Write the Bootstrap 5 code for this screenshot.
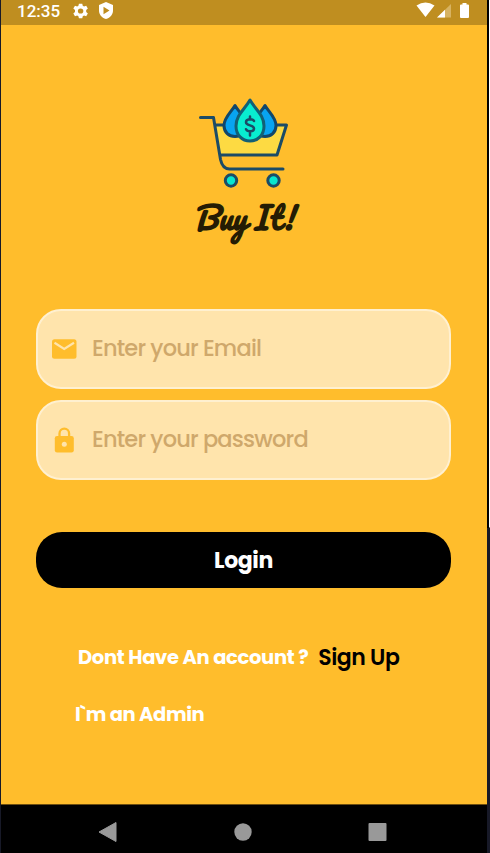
<!DOCTYPE html>
<html lang="en">
<head>
<meta charset="utf-8">
<meta name="viewport" content="width=device-width, initial-scale=1">
<title>Buy It!</title>
<link href="https://cdn.jsdelivr.net/npm/bootstrap@5.3.0/dist/css/bootstrap.min.css" rel="stylesheet">
<style>
body{height:853px;overflow:hidden;background:#171927;font-family:Poppins,Inter,"Open Sans",sans-serif}
.phone{width:486px;height:853px;margin-left:1px;background:#ffbd2c}
.edge{width:3px;height:528px;background:#000;border-right:1px solid #fff;border-bottom:1px solid #000}
.statusbar{height:25px;background:#bf8e20;padding:0 17px 3px 16px;font:500 17px/22px Roboto,sans-serif;flex:none}
.logo{padding-top:70px;height:284px}
.logo svg{margin-right:2px}
.brand{font:700 30.5px/44px Pacifico,Lato,cursive;color:#251c04;margin-top:2px;letter-spacing:-.4px;transform:skewX(-7deg)}
.form-area{padding:0 36px 0 35px}
.field{height:80px;border:2px solid #fff0d0;border-radius:25px;background:#ffe4ac;padding-left:14px;gap:15px}
.field + .field{margin-top:11px}
.field .form-control{font-size:22.5px;font-weight:500;letter-spacing:-.8px;color:#6b5632}
.field .form-control::placeholder{color:#cfa86b;opacity:1}
.login{height:56px;margin-top:52px;border-radius:26px;font-size:22px;font-weight:700;letter-spacing:-.4px}
.login,.login:hover{background:#000;color:#fff}
.links{margin-top:55px;height:30px;padding-left:77px;gap:10px;font-size:19.5px;font-weight:700}
.ask{letter-spacing:-.32px}
.signup{font-size:22px;font-weight:600;letter-spacing:-.5px;margin-top:-2px}
.admin{margin-top:28px;padding-left:74px;font-size:19.5px;line-height:28px;font-weight:700;letter-spacing:-.38px}
.navkeys{height:49px;background:#000;border-top:1px solid #6d4e10;padding:6px 100px 0 97px}
</style>
</head>
<body class="d-flex">
<main class="phone d-flex flex-column flex-shrink-0">
  <header class="statusbar d-flex align-items-center text-white">
    <span>12:35</span>
    <svg class="ms-2 ps-1" width="22" height="18" viewBox="0 0 22 18"><g transform="translate(10.500 9) scale(1.200 1.120)" fill="#fff"><path fill-rule="evenodd" d="M-1.700-8h3.400l.5 2.200 1.300.8 2.200-.8 1.700 3L5.700-1.200v2.400l1.700 1.600-1.700 3-2.200-.8-1.300.8-.5 2.200h-3.400l-.5-2.200-1.300-.8-2.200.8-1.700-3 1.700-1.600v-2.400l-1.700-1.600 1.700-3 2.200.8 1.300-.8zM0-2.800a2.800 2.800 0 1 0 0 5.600 2.800 2.800 0 0 0 0-5.600z"/></g></svg>
    <svg class="ms-2" width="16" height="18" viewBox="0 0 16 18"><path fill="#fff" fill-rule="evenodd" d="M8 0l7 3v5.500c0 4-2.500 7.200-7 8.500-4.500-1.300-7-4.500-7-8.500V3zM5.500 4.800v7.500l6-3.700z"/></svg>
    <svg class="ms-auto" width="54" height="18" viewBox="0 0 54 18"><path fill="#fff" d="M.5 3.500Q9.500-2.500 18.500 3.500L9.500 15z"/><path fill="#d7b362" d="M21 15.500L35 2v13.500z"/><path fill="#fff" d="M21 15.500l8-7.700v7.700zM46.500 1h4v1.500H52q1 0 1 1V15q0 1-1 1h-7q-1 0-1-1V3.500q0-1 1-1h1.500z"/></svg>
  </header>

  <section class="logo d-flex flex-column align-items-center flex-shrink-0">
    <svg width="92" height="98" viewBox="197 95 92 98" fill="none" stroke="#1c4b66" stroke-width="3" stroke-linecap="round" stroke-linejoin="round">
      <path fill="#fdda42" stroke="none" d="M215 125h71l-9 30h-57z"/>
      <path d="M200.500 117.500h13l7 42q2 9.500 9 9.500H283M215.500 125H223M277 125h9.500l-9.500 30h-56"/>
      <g fill="#08a4f1" stroke="#11476b"><path d="M235 105.500c-4 7-11 12-11 20 0 7 5 11 11 11s11-4 11-11c0-8-7-13-11-20zM265 105.500c-4 7-11 12-11 20 0 7 5 11 11 11s11-4 11-11c0-8-7-13-11-20z"/></g>
      <path fill="#08edd0" stroke="#126076" d="M250 100c-5 9-14 15-14 26 0 9 6 15 14 15s14-6 14-15c0-11-9-17-14-26z"/>
      <path stroke-width="2.500" d="M254 121c-1-2.500-8-2.500-8 1.200 0 4 8 2.300 8 6.300 0 3.800-7 3.600-8 .7M250 116.500v3M250 131.500v4"/>
      <g fill="#08e6cf"><circle cx="231" cy="180.500" r="5.700"/><circle cx="273.500" cy="180.500" r="5.700"/></g>
    </svg>
    <div class="brand ms-1">Buy It!</div>
  </section>

  <form class="form-area">
    <div class="field d-flex align-items-center">
      <svg width="25" height="20" viewBox="0 0 25 20" class="flex-shrink-0"><rect width="24.500" height="19.500" y=".2" rx="2.500" fill="#ffbd2c"/><path d="M2.500 3.800l9.700 6.200L22 3.800" fill="none" stroke="#ffe4ac" stroke-width="2.200"/></svg>
      <input type="email" class="form-control border-0 bg-transparent shadow-none p-0" placeholder="Enter your Email" aria-label="Email">
    </div>
    <div class="field d-flex align-items-center">
      <svg width="25" height="26" viewBox="0 0 25 26" class="flex-shrink-0"><path d="M7.500 10V6.500a4.800 4.800 0 0 1 9.600 0V10" fill="none" stroke="#ffbd2c" stroke-width="2.300"/><rect x="2.800" y="9" width="19" height="16.500" rx="2.300" fill="#ffbd2c"/><circle cx="12.300" cy="17.300" r="2.500" fill="#ffe4ac"/></svg>
      <input type="password" class="form-control border-0 bg-transparent shadow-none p-0" placeholder="Enter your password" aria-label="Password">
    </div>
    <button type="button" class="login btn w-100 border-0 p-0 d-block">Login</button>
  </form>

  <div class="links d-flex align-items-center text-nowrap">
    <span class="ask text-white">Dont Have An account ?</span>
    <a href="#" class="signup text-black text-decoration-none">Sign Up</a>
  </div>
  <a href="#" class="admin text-white text-decoration-none">I`m an Admin</a>

  <nav class="navkeys mt-auto d-flex justify-content-between align-items-center">
    <svg width="19" height="20" viewBox="0 0 19 20"><path fill="#999" d="M18 0.500v19L1 10z" stroke="#999" stroke-linejoin="round"/></svg>
    <svg width="18" height="18" viewBox="0 0 18 18"><circle cx="9" cy="9" r="8.700" fill="#999"/></svg>
    <svg width="19" height="18" viewBox="0 0 19 18"><rect x=".5" width="18" height="18" rx="1" fill="#999"/></svg>
  </nav>
</main>
<div class="edge flex-shrink-0"></div>
<script src="https://cdn.jsdelivr.net/npm/bootstrap@5.3.0/dist/js/bootstrap.bundle.min.js"></script>
</body>
</html>
